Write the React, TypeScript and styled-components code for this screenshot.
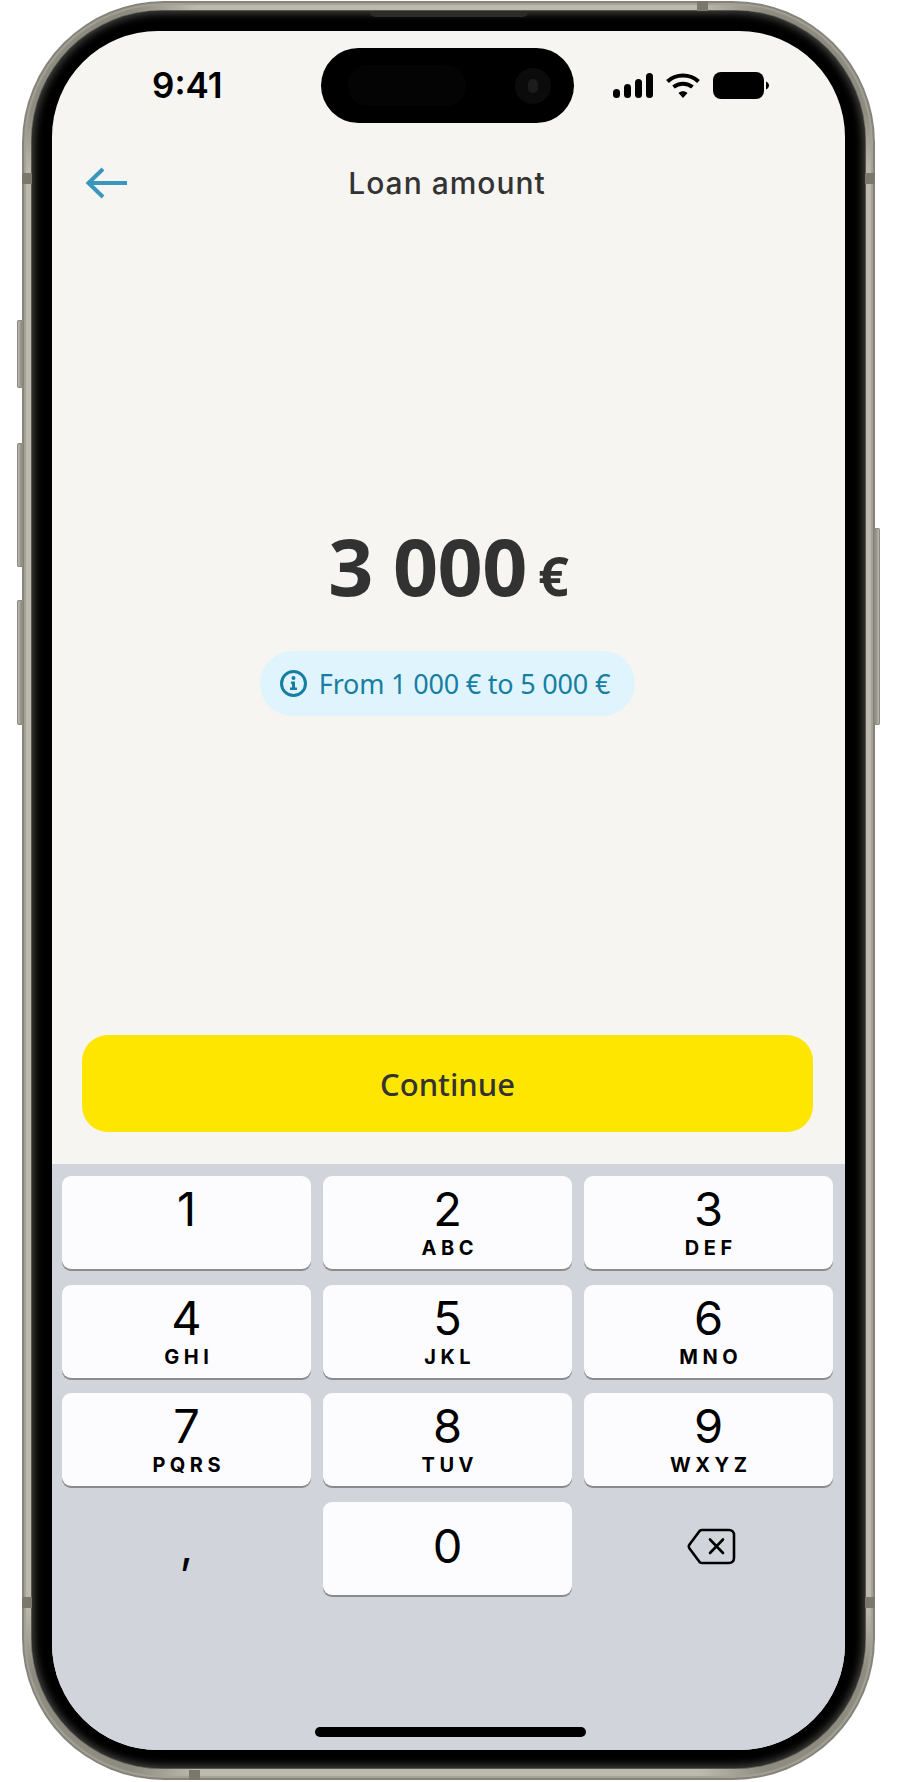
// src/App.tsx
import React from 'react';
import styled, { createGlobalStyle } from 'styled-components';

const GlobalStyle = createGlobalStyle`
  html, body {
    margin: 0;
    padding: 0;
    background: #ffffff;
  }
  * {
    box-sizing: border-box;
  }
`;

const Page = styled.div`
  width: 897px;
  height: 1782px;
  padding: 1px 22px 2px 22px;
`;

const Frame = styled.div`
  position: relative;
  height: 100%;
  padding: 10px 10px 12px 10px;
  border-radius: 142px;
  background:
    radial-gradient(circle at 0 0, #8e8c80 110px, transparent 175px),
    radial-gradient(circle at 100% 0, #8e8c80 110px, transparent 175px),
    radial-gradient(circle at 0 100%, #8e8c80 110px, transparent 175px),
    radial-gradient(circle at 100% 100%, #8e8c80 110px, transparent 175px),
    #bcbaaf;
  box-shadow:
    inset 0 0 0 2px #85837a,
    inset 0 0 1px 4px #a3a196;
`;

const SideButton = styled.span<{ $top: number; $height: number; $right?: boolean }>`
  position: absolute;
  top: ${(p) => p.$top}px;
  height: ${(p) => p.$height}px;
  width: 6px;
  ${(p) => (p.$right ? 'right: -5px;' : 'left: -5px;')}
  border-radius: ${(p) => (p.$right ? '0 2px 2px 0' : '2px 0 0 2px')};
  background: linear-gradient(
    ${(p) => (p.$right ? '270deg' : '90deg')},
    #c8c7bf 0%,
    #9a988e 60%,
    #86847a 100%
  );
  box-shadow: inset 0 0 0 1px #8d8b82;
`;

const AntennaBand = styled.span<{ $side: 'left' | 'right' | 'top' | 'bottom'; $pos: number }>`
  position: absolute;
  background: #7a786d;
  ${(p) =>
    p.$side === 'left' || p.$side === 'right'
      ? `${p.$side}: 0; top: ${p.$pos}px; width: 10px; height: 11px;`
      : `${p.$side}: 0; left: ${p.$pos}px; width: 11px; height: 10px;`}
`;

const Speaker = styled.span`
  position: absolute;
  top: 11px;
  left: 348px;
  width: 158px;
  height: 5px;
  border-radius: 0 0 5px 5px;
  background: #2b2b29;
`;

const Bezel = styled.div`
  height: 100%;
  padding: 20px 20px 18px 20px;
  border-radius: 130px;
  background: #000000;
  box-shadow:
    0 0 0 1px #55544e,
    inset 0 0 9px 2px #484846;
`;

const Screen = styled.div`
  position: relative;
  height: 100%;
  display: flex;
  flex-direction: column;
  overflow: hidden;
  border-radius: 106px;
  background: #f6f5f1;
`;

const Island = styled.div`
  position: absolute;
  top: 17px;
  left: 269px;
  width: 253px;
  height: 75px;
  padding: 0 27px;
  display: flex;
  align-items: center;
  justify-content: space-between;
  border-radius: 38px;
  background: #000000;
`;

const IslandSensor = styled.span`
  width: 118px;
  height: 41px;
  border-radius: 20px;
  background: #040404;
`;

const IslandCamera = styled.span`
  width: 36px;
  height: 36px;
  margin-right: -4px;
  display: flex;
  align-items: center;
  justify-content: center;
  border-radius: 50%;
  background: #0b0b0b;

  &::after {
    content: '';
    width: 10px;
    height: 14px;
    border-radius: 5px;
    background: #1c1c1c;
  }
`;

const StatusBar = styled.div`
  height: 108px;
  padding: 39px 76px 0 100px;
  display: flex;
  align-items: flex-start;
  justify-content: space-between;
`;

const Time = styled.span`
  font-family: Inter, 'Liberation Sans', sans-serif;
  font-size: 35px;
  font-weight: 600;
  line-height: 30px;
  color: #000000;
`;

const StatusIcons = styled.div`
  display: flex;
  align-items: center;
  gap: 13px;
  margin-top: 2px;
`;

const NavRow = styled.div`
  height: 88px;
  padding: 0 36px 0 33px;
  display: grid;
  grid-template-columns: 1fr auto 1fr;
  align-items: center;
`;

const Title = styled.h1`
  margin: 0;
  font-family: Inter, 'Noto Sans', sans-serif;
  font-size: 30px;
  font-weight: 500;
  letter-spacing: 1px;
  color: #333333;
`;

const Middle = styled.main`
  flex: 1;
  padding-top: 289px;
  display: flex;
  flex-direction: column;
  align-items: center;
`;

const Amount = styled.div`
  height: 100px;
  display: flex;
  align-items: baseline;
  gap: 11px;
  font-family: 'Noto Sans', 'Open Sans', sans-serif;
  font-weight: 700;
  line-height: 100px;
  color: #323232;
`;

const AmountValue = styled.span`
  font-size: 79px;
  letter-spacing: -0.5px;
`;

const AmountCurrency = styled.span`
  font-size: 54px;
`;

const RangePill = styled.div`
  height: 65px;
  margin: 35px 2px 0 0;
  padding: 0 25px 0 20px;
  display: flex;
  align-items: center;
  gap: 12px;
  border-radius: 33px;
  background: #e0f4fd;
  font-family: 'Noto Sans', 'Open Sans', sans-serif;
  font-size: 27px;
  letter-spacing: -0.2px;
  color: #177ea3;
`;

const ContinueButton = styled.button`
  height: 97px;
  margin: 0 32px 32px 30px;
  border: 0;
  border-radius: 26px;
  background: #ffe600;
  font-family: 'Noto Sans', 'Open Sans', sans-serif;
  font-size: 31px;
  font-weight: 500;
  color: #333333;
`;

const Keyboard = styled.section`
  position: relative;
  height: 586px;
  padding: 12px 12px 0 10px;
  background: #d1d4db;
`;

const KeyGrid = styled.div`
  display: grid;
  grid-template-columns: repeat(3, 1fr);
  grid-auto-rows: 93px;
  gap: 15.5px 12px;
`;

const Key = styled.div<{ $flat?: boolean; $low?: boolean }>`
  display: flex;
  flex-direction: column;
  align-items: center;
  padding-top: ${(p) => (p.$low ? '16px' : '5px')};
  border-radius: 9px;
  background: ${(p) => (p.$flat ? 'transparent' : '#fcfcfe')};
  box-shadow: ${(p) => (p.$flat ? 'none' : '0 2px 0 #8b8b8d')};
  color: #000000;
`;

const KeyDigit = styled.span`
  font-family: Inter, 'Liberation Sans', sans-serif;
  font-size: 47px;
  font-weight: 400;
  line-height: 56px;
`;

const KeyLetters = styled.span`
  margin-right: -4.5px;
  font-family: Inter, 'Liberation Sans', sans-serif;
  font-size: 20px;
  font-weight: 700;
  line-height: 22px;
  letter-spacing: 4.5px;
`;

const BackspaceKey = styled(Key)`
  padding-top: 26px;
  padding-left: 5px;
`;

const HomeIndicator = styled.span`
  position: absolute;
  left: 263px;
  bottom: 13px;
  width: 271px;
  height: 10px;
  border-radius: 5px;
  background: #000000;
`;

const BackArrow = () => (
  <svg width="42" height="32" viewBox="0 0 42 32" fill="none" stroke="#3797bd" strokeWidth="4">
    <path d="M42 16H4" />
    <path d="M18 2L3.5 16L18 30" />
  </svg>
);

const SignalIcon = () => (
  <svg width="40" height="25" viewBox="0 0 40 25" fill="#000">
    <rect x="0" y="16" width="7" height="9" rx="3.5" />
    <rect x="11" y="11" width="7" height="14" rx="3.5" />
    <rect x="22" y="6" width="7" height="19" rx="3.5" />
    <rect x="33" y="0" width="7" height="25" rx="3.5" />
  </svg>
);

const WifiIcon = () => (
  <svg width="34" height="25" viewBox="0 0 34 25" fill="none" stroke="#000" strokeWidth="4">
    <path d="M1.5 8.5C10 0.5 24 0.5 32.5 8.5" />
    <path d="M7.5 14C13 9.5 21 9.5 26.5 14" />
    <path d="M12.5 20L17 25L21.5 20C19 17.5 15 17.5 12.5 20Z" fill="#000" stroke="none" />
  </svg>
);

const BatteryIcon = () => (
  <svg width="56" height="27" viewBox="0 0 56 27" fill="#000">
    <rect x="0" y="0" width="51" height="27" rx="8" />
    <path d="M53 9.5C55 10.5 56 12 56 13.5C56 15 55 16.5 53 17.5Z" />
  </svg>
);

const InfoIcon = () => (
  <svg width="27" height="27" viewBox="0 0 27 27" fill="none">
    <circle cx="13.5" cy="13.5" r="12" stroke="#177ea3" strokeWidth="3" />
    <circle cx="13.5" cy="8" r="2" fill="#177ea3" />
    <path d="M11 11.5H15V17.5H17V20H10V17.5H12V14H11Z" fill="#177ea3" />
  </svg>
);

const BackspaceIcon = () => (
  <svg width="49" height="37" viewBox="0 0 49 37" fill="none" stroke="#000" strokeWidth="2.6" strokeLinejoin="round">
    <path d="M15 2H42C45 2 47 4 47 7V30C47 33 45 35 42 35H15C14 35 13.4 34.7 12.8 34.2L2.5 20.5C1.6 19.2 1.6 17.8 2.5 16.5L12.8 2.8C13.4 2.3 14 2 15 2Z" />
    <path d="M23 11.5L36 25M36 11.5L23 25" strokeLinecap="round" />
  </svg>
);

const keys: { digit: string; letters?: string }[] = [
  { digit: '1' },
  { digit: '2', letters: 'ABC' },
  { digit: '3', letters: 'DEF' },
  { digit: '4', letters: 'GHI' },
  { digit: '5', letters: 'JKL' },
  { digit: '6', letters: 'MNO' },
  { digit: '7', letters: 'PQRS' },
  { digit: '8', letters: 'TUV' },
  { digit: '9', letters: 'WXYZ' },
];

const App: React.FC = () => {
  return (
    <Page>
      <GlobalStyle />
      <Frame>
        <SideButton $top={319} $height={68} />
        <SideButton $top={442} $height={124} />
        <SideButton $top={599} $height={125} />
        <SideButton $right $top={527} $height={197} />
        <AntennaBand $side="left" $pos={172} />
        <AntennaBand $side="right" $pos={172} />
        <AntennaBand $side="left" $pos={1596} />
        <AntennaBand $side="right" $pos={1596} />
        <AntennaBand $side="top" $pos={675} />
        <AntennaBand $side="bottom" $pos={167} />
        <Speaker />
        <Bezel>
          <Screen>
            <Island>
              <IslandSensor />
              <IslandCamera />
            </Island>
            <StatusBar>
              <Time>9:41</Time>
              <StatusIcons>
                <SignalIcon />
                <WifiIcon />
                <BatteryIcon />
              </StatusIcons>
            </StatusBar>
            <NavRow>
              <BackArrow />
              <Title>Loan amount</Title>
            </NavRow>
            <Middle>
              <Amount>
                <AmountValue>3 000</AmountValue>
                <AmountCurrency>€</AmountCurrency>
              </Amount>
              <RangePill>
                <InfoIcon />
                From 1 000 € to 5 000 €
              </RangePill>
            </Middle>
            <ContinueButton>Continue</ContinueButton>
            <Keyboard>
              <KeyGrid>
                {keys.map((k) => (
                  <Key key={k.digit}>
                    <KeyDigit>{k.digit}</KeyDigit>
                    {k.letters && <KeyLetters>{k.letters}</KeyLetters>}
                  </Key>
                ))}
                <Key $flat $low>
                  <KeyDigit>,</KeyDigit>
                </Key>
                <Key $low>
                  <KeyDigit>0</KeyDigit>
                </Key>
                <BackspaceKey $flat>
                  <BackspaceIcon />
                </BackspaceKey>
              </KeyGrid>
              <HomeIndicator />
            </Keyboard>
          </Screen>
        </Bezel>
      </Frame>
    </Page>
  );
};

export default App;
